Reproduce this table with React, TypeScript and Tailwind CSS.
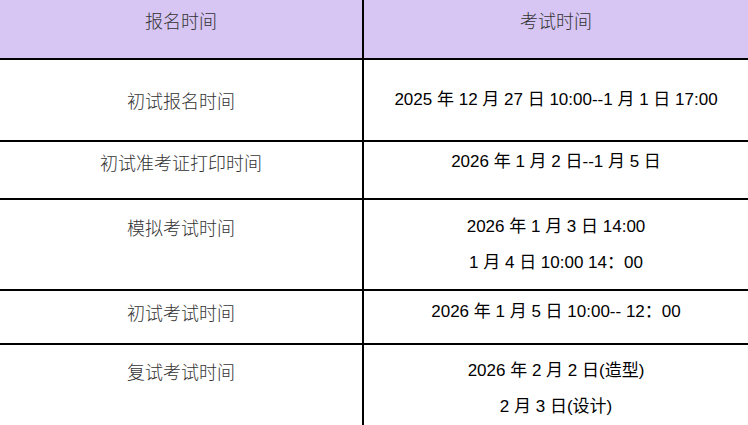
type Row = {
  name: string;
  times: string[];
  h: string;
  pt: string;
  center?: boolean;
};

const rows: Row[] = [
  { name: "初试报名时间", times: ["2025 年 12 月 27 日 10:00--1 月 1 日 17:00"], h: "h-[82px]", pt: "pt-0", center: true },
  { name: "初试准考证打印时间", times: ["2026 年 1 月 2 日--1 月 5 日"], h: "h-[58px]", pt: "pt-[8px]" },
  { name: "模拟考试时间", times: ["2026 年 1 月 3 日 14:00", "1 月 4 日 10:00 14：00"], h: "h-[91px]", pt: "pt-[15px]" },
  { name: "初试考试时间", times: ["2026 年 1 月 5 日 10:00-- 12：00"], h: "h-[54px]", pt: "pt-[9px]" },
  { name: "复试考试时间", times: ["2026 年 2 月 2 日(造型)", "2 月 3 日(设计)"], h: "h-[100px]", pt: "pt-[14px]" },
];

const cjk = "font-['Noto_Sans_CJK_SC',sans-serif] font-light";
const mixed = "font-['Liberation_Sans','Noto_Sans_CJK_SC',sans-serif]";

export default function App() {
  return (
    <div className="w-[748px] h-[425px] overflow-hidden bg-white">
      {/* 表头 */}
      <div className="flex h-[60px] border-b-2 border-black bg-[#d7c6f3]">
        <div className={`w-[364px] border-r-2 border-black pt-[8px] text-center text-[18px] leading-[24px] text-[#333] ${cjk}`}>
          报名时间
        </div>
        <div className={`flex-1 pt-[8px] text-center text-[18px] leading-[24px] text-[#333] ${cjk}`}>
          考试时间
        </div>
      </div>

      {rows.map((r) => (
        <div key={r.name} className={`flex ${r.h} border-b-2 border-black`}>
          <div
            className={`w-[364px] border-r-2 border-black text-center text-[18px] leading-[24px] text-[#333] ${cjk} ${r.pt} ${
              r.center ? "flex items-center justify-center" : ""
            }`}
          >
            {r.name}
          </div>
          <div
            className={`flex-1 flex flex-col gap-[12px] text-center text-[17px] leading-[24px] text-black ${mixed} ${r.pt} ${
              r.center ? "justify-center" : ""
            }`}
          >
            {r.times.map((t) => (
              <div key={t}>{t}</div>
            ))}
          </div>
        </div>
      ))}
    </div>
  );
}
